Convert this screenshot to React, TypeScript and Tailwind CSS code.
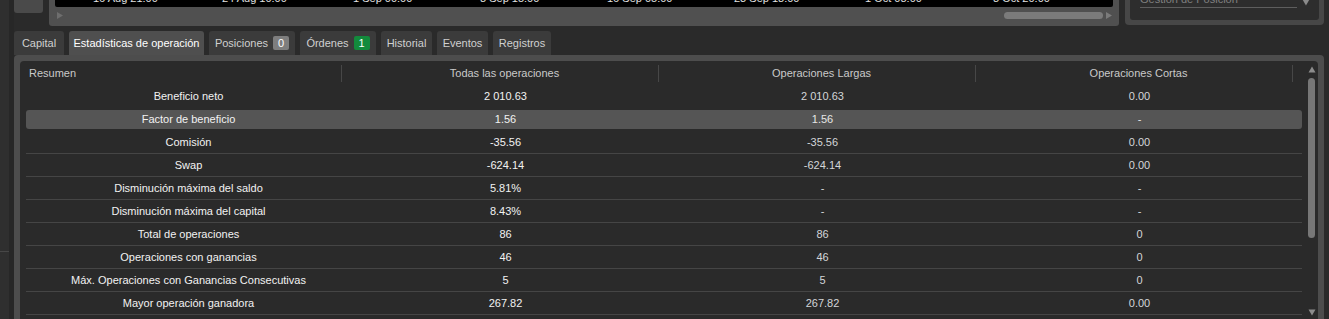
import React from "react";

const TICKS = [
  { label: "16 Aug 21:00", x: 38 },
  { label: "24 Aug 10:00", x: 167 },
  { label: "1 Sep 00:00", x: 298 },
  { label: "8 Sep 15:00", x: 425 },
  { label: "16 Sep 05:00", x: 552 },
  { label: "23 Sep 18:00", x: 679 },
  { label: "1 Oct 08:00", x: 810 },
  { label: "8 Oct 20:00", x: 938 },
];

const TABS = [
  { label: "Capital", w: "w-[50px]" },
  { label: "Estadísticas de operación", w: "w-[135px]", active: true },
  { label: "Posiciones", w: "w-[86px]", badge: "0" },
  { label: "Órdenes", w: "w-[76px]", badge: "1", green: true },
  { label: "Historial", w: "w-[51px]" },
  { label: "Eventos", w: "w-[51px]" },
  { label: "Registros", w: "w-[58px]" },
];

const ROWS: [string, string, string, string][] = [
  ["Beneficio neto", "2 010.63", "2 010.63", "0.00"],
  ["Factor de beneficio", "1.56", "1.56", "-"],
  ["Comisión", "-35.56", "-35.56", "0.00"],
  ["Swap", "-624.14", "-624.14", "0.00"],
  ["Disminución máxima del saldo", "5.81%", "-", "-"],
  ["Disminución máxima del capital", "8.43%", "-", "-"],
  ["Total de operaciones", "86", "86", "0"],
  ["Operaciones con ganancias", "46", "46", "0"],
  ["Máx. Operaciones con Ganancias Consecutivas", "5", "5", "0"],
  ["Mayor operación ganadora", "267.82", "267.82", "0.00"],
  ["Mayor operación perdedora", "-120.40", "-120.40", "0.00"],
];

function Tri({ up, className }: { up?: boolean; className?: string }) {
  return (
    <svg width="8" height="7" viewBox="0 0 8 7" className={className}>
      <path d={up ? "M4 0.5 L7.5 6.5 L0.5 6.5 Z" : "M0.5 0.5 L7.5 0.5 L4 6.5 Z"} fill="currentColor" />
    </svg>
  );
}

function HeaderCell({ label, left }: { label: string; left?: boolean }) {
  return (
    <div className="w-[317px] flex items-center h-full">
      <span className={`flex-1 ${left ? "text-left" : "text-center pl-[5px]"} text-[#c9c9c9]`}>{label}</span>
      <span className="w-px h-[17px] bg-[#474747]" />
      <span className="w-[4px]" />
    </div>
  );
}

export default function App() {
  return (
    <div className="w-[1329px] h-[319px] overflow-hidden bg-[#2a2a2a] flex font-['Liberation_Sans',Arial,sans-serif] text-[11px] leading-[13px]">
      {/* left strip */}
      <div className="w-[9px] bg-[#2f2f2f] flex flex-col">
        <div className="h-[252px] border-b border-[#474747]" />
      </div>
      <div className="w-[5px] bg-[#272727]" />

      <div className="flex-1 flex flex-col min-h-0">
        {/* top row: menu button, chart, position panel */}
        <div className="h-[26px] shrink-0 flex items-start">
          <div className="w-[29px] h-[13px] bg-[#4a4a4a] rounded-b-[3px] flex justify-center overflow-hidden">
            <span className="-mt-[8px] text-[#e6e6e6] text-[11px] tracking-[-1px]">•••</span>
          </div>
          <div className="ml-[6px] w-[1070px] h-[26px] bg-[#505050] rounded-b-[3px] px-[6px] flex flex-col">
            <div className="relative h-[7px] bg-black rounded-b-[2px] overflow-hidden">
              {TICKS.map((t) => (
                <span key={t.label} className="absolute top-[-8px] text-[#e2e2e2] whitespace-nowrap" style={{ left: t.x }}>
                  {t.label}
                </span>
              ))}
            </div>
            <div className="flex items-center h-[13px] mt-[2px]">
              <Tri className="text-[#6e6e6e] -rotate-90 ml-[1px]" />
              <div className="flex-1" />
              <div className="w-[99px] h-[7px] rounded-full bg-[#7b7b7b]" />
              <Tri className="text-[#7b7b7b] -rotate-90 ml-[2px]" />
            </div>
          </div>
          <div className="ml-[6px] w-[199px] h-[25px] bg-[#474747] rounded-b-[4px] px-[5px] pb-[5px]">
            <div className="h-full bg-[#2d2d2d] rounded-b-[3px] flex items-start pl-[10px] pr-[9px]">
              <div className="w-[158px] h-[8px] border-b border-[#5e5e5e] overflow-hidden">
                <span className="block -mt-[7px] text-[#808080] whitespace-nowrap">Gestión de Posición</span>
              </div>
              <Tri className="text-[#8a8a8a] ml-[5px] -mt-[1px]" />
            </div>
          </div>
        </div>

        {/* tabs */}
        <div className="mt-[5px] h-[24px] shrink-0 flex gap-[5px]">
          {TABS.map((t) => (
            <div
              key={t.label}
              className={`${t.w} h-full rounded-t-[3px] flex items-center justify-center gap-[5px] ${
                t.active ? "bg-[#4f4f4f] text-white" : "bg-[#3b3b3b] text-[#d0d0d0]"
              }`}
            >
              <span>{t.label}</span>
              {t.badge && (
                <span
                  className={`w-[16px] h-[14px] rounded-[2px] flex items-center justify-center text-white ${
                    t.green ? "bg-[#138a3c]" : "bg-[#7e7e7e]"
                  }`}
                >
                  {t.badge}
                </span>
              )}
            </div>
          ))}
        </div>

        {/* stats panel */}
        <div className="w-[1310px] flex-1 min-h-0 overflow-hidden bg-[#4d4d4d] rounded-t-[4px] pt-[6px] px-[6px]">
          <div className="h-full bg-[#2a2a2a] rounded-t-[4px] flex pl-[6px]">
            <div className="w-[1276px] flex flex-col">
              <div className="h-[24px] flex pl-[3px] shrink-0">
                <HeaderCell label="Resumen" left />
                <HeaderCell label="Todas las operaciones" />
                <HeaderCell label="Operaciones Largas" />
                <HeaderCell label="Operaciones Cortas" />
              </div>
              {ROWS.map((r, i) => {
                const sel = i === 1;
                return (
                  <div
                    key={r[0]}
                    className={`h-[23px] shrink-0 py-[2px] ${i >= 2 ? "border-b border-[#454545]" : ""}`}
                  >
                    <div
                      className={`h-full flex items-center pl-[4px] rounded-[3px] ${sel ? "bg-[#555555]" : ""}`}
                    >
                      <span className="w-[317px] text-center text-[#f2f2f2]">{r[0]}</span>
                      <span className="w-[317px] text-center text-[#f2f2f2]">{r[1]}</span>
                      <span className={`w-[317px] text-center ${sel ? "text-[#e6e6e6]" : "text-[#d4d6d9]"}`}>{r[2]}</span>
                      <span className={`w-[317px] text-center ${sel ? "text-[#e6e6e6]" : "text-[#d4d6d9]"}`}>{r[3]}</span>
                    </div>
                  </div>
                );
              })}
            </div>
            {/* scrollbar */}
            <div className="w-[16px] shrink-0 flex flex-col items-center pl-[3px] pt-[5px]">
              <Tri up className="text-[#8c8c8c] shrink-0" />
              <div className="mt-[5px] w-[7px] h-[160px] shrink-0 rounded-full bg-[#777777]" />
              <Tri className="mt-[71px] shrink-0 text-[#8c8c8c]" />
            </div>
          </div>
        </div>
      </div>
    </div>
  );
}
